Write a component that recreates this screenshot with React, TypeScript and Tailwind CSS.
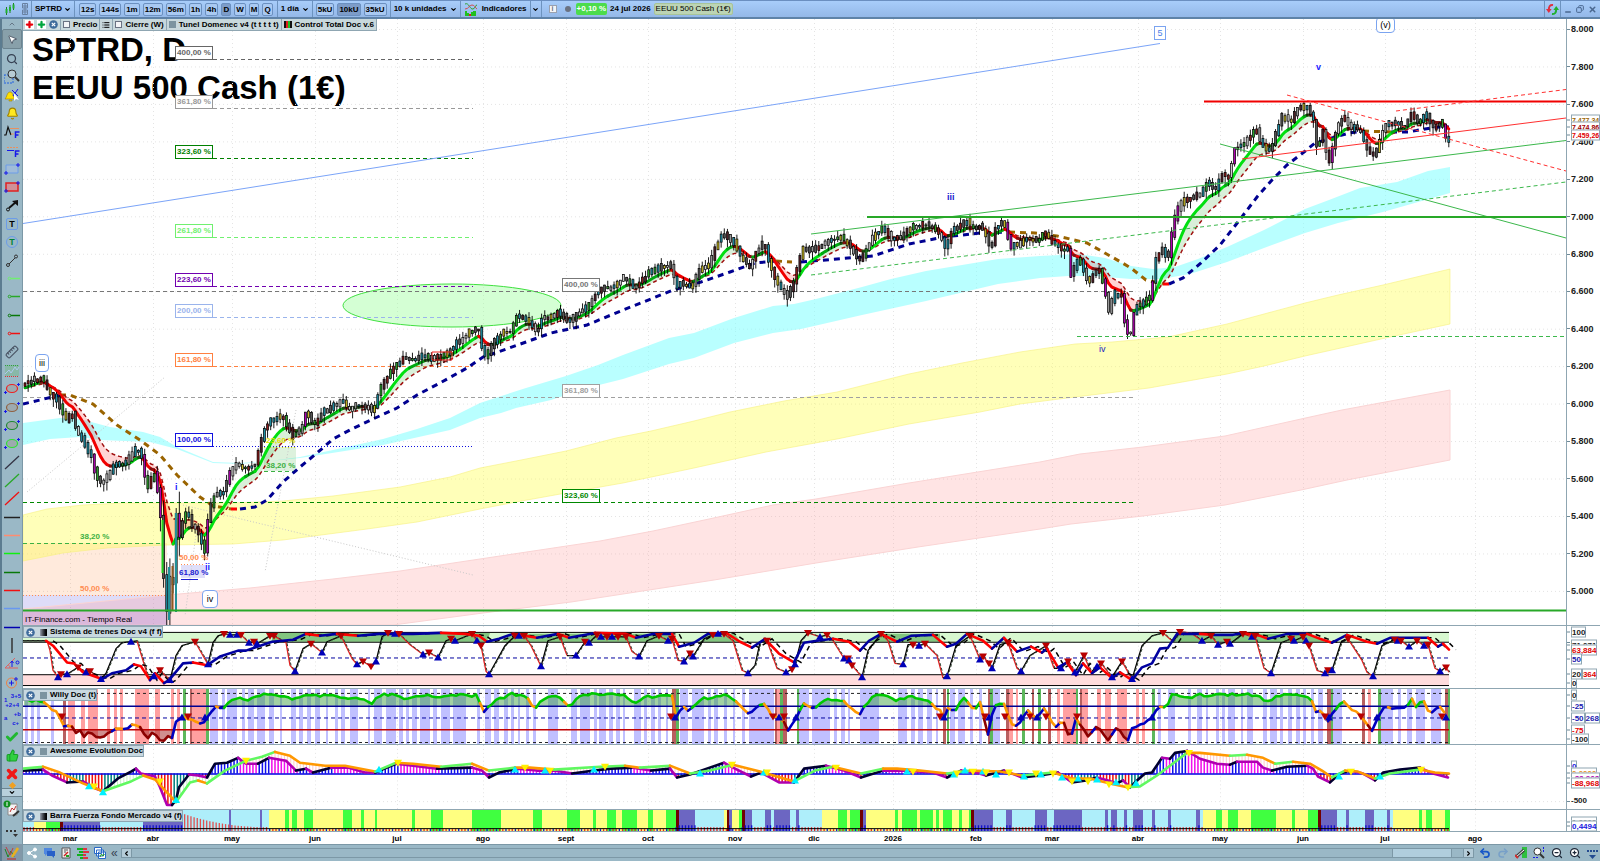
import type { ReactNode } from 'react';
import {
  Bell, Check, ChevronDown, ChevronLeft, ChevronRight, ChevronUp, Copy, List, Minus,
  MousePointer2, Plus, Redo2, Ruler, Search, Share2, ThumbsUp, Undo2, X, ZoomIn, ZoomOut,
} from 'lucide-react';

type Pt = [number, number];

const X0 = 23;
const PLOT_W = 1543;

const MONTHS: [string, number][] = [
  ['mar', 70], ['abr', 153], ['may', 232], ['jun', 315], ['jul', 397], ['ago', 483], ['sept', 566],
  ['oct', 648], ['nov', 735], ['dic', 814], ['2026', 893], ['feb', 976], ['mar', 1052], ['abr', 1138],
  ['may', 1220], ['jun', 1303], ['jul', 1385], ['ago', 1475],
];

const PRICE = '25,383 33,380 42,378 49,394 55,397 60,408 66,420 72,413 77,433 83,440 87,450 92,457 95,475 102,485 108,475 113,467 118,463 124,465 130,457 137,448 142,457 144,473 147,488 152,478 155,473 158,495 161,520 163,570 167,613 169,567 172,607 176,515 180,540 184,513 188,515 192,525 197,530 201,540 204,557 207,523 213,497 218,495 223,493 230,473 235,463 240,467 247,468 255,465 260,443 265,427 272,420 282,417 288,427 293,437 302,427 306,410 312,423 317,423 323,412 333,407 342,400 348,410 355,405 367,407 373,412 377,397 383,383 393,368 403,358 413,360 425,355 433,360 447,353 455,345 464,337 474,329 480,330 483,357 487,355 494,342 503,332 510,332 516,317 525,318 534,328 537,333 542,318 551,317 560,312 569,323 578,313 587,307 596,293 605,288 614,287 625,277 634,287 641,282 650,272 662,267 673,265 675,290 680,283 691,288 700,268 709,267 716,245 723,235 728,237 734,243 742,260 750,267 757,250 764,243 769,262 775,280 780,288 787,297 794,283 798,262 803,250 812,250 819,247 832,240 842,238 851,247 859,262 866,250 873,237 882,229 891,238 900,240 909,228 923,225 934,227 941,238 946,250 950,233 959,227 966,221 973,228 980,227 985,233 991,253 994,228 1005,223 1010,247 1019,245 1027,238 1037,242 1044,232 1050,240 1061,250 1068,250 1072,287 1075,260 1081,263 1088,283 1098,267 1103,283 1109,313 1114,293 1122,297 1125,328 1130,337 1135,307 1142,303 1151,297 1155,260 1162,248 1168,260 1172,233 1176,212 1183,200 1191,199 1201,193 1208,183 1217,190 1220,175 1229,177 1234,150 1246,142 1256,128 1261,143 1270,152 1277,130 1282,117 1291,122 1298,108 1306,107 1313,117 1317,150 1323,130 1327,160 1330,162 1334,137 1339,123 1344,117 1351,128 1360,130 1366,147 1372,157 1378,147 1384,127 1392,122 1404,127 1411,115 1418,123 1426,113 1432,128 1439,123 1444,125 1446,140 1449,142';

const CYAN_TOP = '23,423 60,418 80,419 110,427 143,432 160,437 177,447 213,462 240,463 270,461 300,457 333,450 383,439 417,429 450,418 480,403 526,388 566,376 598,365 623,355 669,338 694,333 734,318 773,306 794,304 816,299 862,287 891,279 926,271 962,265 998,259 1040,256 1079,254 1105,258 1131,266 1153,269 1175,267 1198,259 1227,247 1264,230 1305,209 1329,200 1360,188 1397,182 1428,171 1450,167';
const CYAN_LOW = '23,445 50,439 80,437 100,440 150,442 177,449 213,463 240,464 300,458 383,445 450,430 480,418 501,413 516,408 551,400 587,388 623,379 669,364 694,358 734,343 773,333 801,329 862,315 926,301 998,284 1040,278 1068,276 1094,276 1131,279 1161,279 1190,274 1227,262 1264,248 1305,233 1338,223 1383,212 1450,193';
const YELLOW_TOP = '23,515 47,509 83,505 123,503 233,503 283,501 333,496 400,487 450,477 480,468 516,461 566,451 616,438 651,431 694,421 730,412 784,401 837,392 909,374 962,363 1020,352 1075,344 1112,342 1168,337 1227,324 1264,314 1305,303 1338,295 1383,285 1450,269';
const YELLOW_LOW = '23,561 63,553 107,548 167,545 233,544 283,540 367,529 417,522 480,509 516,502 566,493 623,483 694,468 766,452 837,439 909,424 980,412 1020,404 1075,397 1149,388 1227,374 1264,366 1305,356 1390,337 1450,324';
const PINK_TOP = '23,609 167,595 250,588 333,579 400,571 500,556 600,541 653,531 709,519 773,505 816,499 909,483 1040,462 1080,454 1143,447 1225,436 1301,419 1342,410 1450,390';
const PINK_LOW = '23,625 393,625 483,613 571,602 714,580 816,563 918,547 1040,529 1071,524 1143,516 1225,505 1301,490 1347,480 1450,460';

// the long average changes colour with its direction
const LONG_MA: [string, string][] = [
  ['#000090', '23,404 40,400 60,395'],
  ['#9a6400', '60,395 70,395 93,404 117,425 140,440 160,455 177,475 200,497 213,506 231,509'],
  ['#ff0000', '231,509 240,509'],
  ['#000090', '240,509 255,507 267,500 283,482 300,467 317,453 333,439 350,430 373,419 397,408 417,395 440,383 467,368 483,357 498,352 526,342 551,333 587,325 623,310 641,303 673,290 701,282 730,272 755,263 776,261'],
  ['#9a6400', '776,261 792,262'],
  ['#000090', '801,262 837,259 873,256 909,244 944,237 980,233 1006,232'],
  ['#9a6400', '1009,232 1035,233 1057,236 1087,243 1112,257 1131,268 1146,280 1163,284'],
  ['#ff0000', '1163,284 1169,284'],
  ['#000090', '1169,284 1183,278 1201,263 1220,245 1238,222 1257,197 1272,180 1287,165 1304,152 1315,143 1332,138 1349,133 1363,131'],
  ['#9a6400', '1363,131 1391,132'],
  ['#000090', '1391,132 1408,132 1425,129 1439,127 1449,127'],
];

// x, y, direction (1 = up triangle, 0 = down, 2 = no mark) of the train signals
const TRAIN = '58,677,1 61,674,0 67,674,1 78,667,0 86,672,1 90,671,0 101,679,1 106,673,2 116,648,2 122,642,2 131,641,1 137,640,2 148,677,2 154,676,1 160,670,0 170,680,1 176,655,2 182,645,2 195,641,0 208,664,1 213,642,2 218,635,2 224,633,0 230,634,1 237,634,1 241,634,0 249,642,1 254,641,0 257,643,1 270,635,0 274,635,0 286,642,2 290,665,2 295,671,1 303,648,2 311,643,0 322,652,1 327,641,2 341,635,0 352,658,2 357,664,1 363,661,0 371,666,0 376,661,1 382,636,2 388,632,0 395,633,1 399,633,0 410,644,2 423,654,1 429,652,0 438,657,1 446,640,2 451,638,0 455,640,1 472,633,0 477,640,1 481,645,0 486,671,2 489,674,1 505,645,2 515,635,0 519,635,1 524,635,0 531,645,2 541,666,1 548,640,2 560,636,0 567,655,2 576,655,1 585,641,0 589,642,1 597,634,0 601,636,1 607,636,0 612,636,1 618,636,0 626,636,0 632,651,2 639,656,1 647,640,2 659,635,0 668,640,1 672,638,0 678,660,2 684,661,1 690,653,0 693,656,1 704,638,2 713,634,0 718,633,1 724,633,0 733,640,2 742,670,2 748,673,1 755,665,2 760,642,2 767,640,0 777,668,2 786,672,1 792,669,0 795,664,1 801,640,2 808,632,0 820,636,1 827,634,0 833,640,2 844,658,1 848,658,0 849,660,1 852,665,0 862,677,1 868,650,2 881,633,0 888,640,2 895,663,2 903,664,1 908,644,2 913,644,0 919,645,1 925,643,0 937,655,2 943,678,2 947,676,1 956,645,2 970,635,0 980,659,1 983,656,0 989,663,0 992,668,1 1000,644,2 1008,642,0 1017,668,2 1021,671,1 1030,655,2 1046,645,0 1054,668,2 1061,668,1 1068,661,0 1075,672,1 1084,655,0 1091,672,2 1097,666,1 1101,663,0 1112,677,1 1122,661,0 1132,679,1 1142,645,2 1152,635,2 1163,632,0 1173,641,2 1180,631,0 1191,632,2 1202,640,1 1211,635,0 1218,644,1 1227,641,0 1230,643,1 1243,633,0 1252,636,1 1255,635,0 1264,668,2 1271,673,1 1281,642,2 1291,638,0 1294,640,1 1303,636,0 1306,640,1 1309,645,0 1317,670,2 1325,673,1 1328,670,0 1332,670,1 1341,642,2 1348,638,0 1362,660,2 1367,672,2 1373,676,1 1382,645,2 1395,639,0 1398,640,1 1401,640,0 1409,646,1 1417,640,0 1424,645,1 1428,644,0 1435,668,2 1440,671,1 1446,667,0 1449,672,2';
const TRAIN_SLOW = '46,640 53,645 67,662 74,663 83,672 102,679 112,673 126,670 134,664 141,666 150,680 155,673 164,683 169,680 183,663 193,662 207,665 220,656 238,650 246,650 272,641 293,639 306,633 320,635 337,633 358,635 379,633 413,633 441,632 465,633 479,635 487,641 499,638 513,633 537,637 558,633 569,637 595,632 626,633 636,637 654,633 672,633 679,646 694,642 708,633 726,632 740,641 752,647 765,638 779,653 794,662 804,642 817,640 833,638 849,641 860,650 869,640 881,633 897,641 911,635 933,634 947,646 956,643 967,633 983,640 992,648 1004,637 1017,651 1031,646 1042,652 1047,648 1058,667 1067,662 1076,675 1083,663 1092,673 1100,667 1112,678 1120,672 1132,680 1142,667 1152,663 1160,648 1168,647 1177,633 1200,633 1213,634 1233,634 1243,632 1260,635 1268,638 1287,633 1307,633 1320,638 1332,642 1347,634 1367,641 1377,643 1390,637 1407,637 1428,637 1438,646 1443,643 1449,649';

const WILLY = '24,700 46,700 50,710 57,712 65,728 71,722 74,735 80,730 84,736 89,733 98,738 110,733 117,728 127,728 133,722 141,728 146,739 153,732 162,742 167,735 172,737 176,720 186,717 203,723 214,706 224,706 229,702 238,697 248,700 262,694 275,693 293,698 306,694 320,695 337,694 348,699 362,697 372,703 377,694 396,694 403,698 424,694 441,697 461,693 477,695 484,711 494,700 503,697 510,693 527,696 534,710 540,700 547,695 560,697 570,707 579,695 600,693 626,695 633,703 644,696 672,695 675,717 683,707 690,710 701,698 726,694 736,702 749,715 763,700 772,717 783,717 786,733 797,717 802,703 813,707 829,698 844,700 851,707 860,713 872,695 880,693 897,700 908,695 926,700 940,710 944,717 949,707 956,710 965,694 974,713 979,697 988,733 994,706 1004,702 1013,727 1020,722 1029,710 1036,717 1044,707 1054,727 1063,720 1070,740 1076,717 1088,735 1097,725 1108,740 1117,727 1127,741 1133,727 1150,720 1157,707 1167,707 1172,693 1187,697 1200,694 1253,694 1267,700 1280,694 1300,694 1312,700 1317,713 1322,710 1328,720 1342,699 1350,708 1360,715 1372,730 1383,708 1407,707 1412,698 1417,707 1423,698 1430,713 1440,705 1447,717';
const WILLY_MARKS = '62,716,0 182,717,1 188,716,0 205,717,1 671,716,0 675,717,1 773,716,0 779,717,1 784,716,0 796,717,1 940,716,0 944,717,1 985,716,0 989,717,1 1005,716,0 1021,717,1 1030,716,0 1037,717,1 1046,716,0 1077,716,0 1152,717,1 1325,716,0 1329,717,1 1361,716,0 1377,717,1 1442,716,0 1446,717,1';

const STRIPES: [string, string][] = [
  ['#c0c0ff', '25-28 31-34 37-40 51-54 210-218 222-225 227-237 242-245 248-254 257-265 269-274 280-282 291-296 299-303 307-311 315-320 326-328 335-338 341-345 350-358 368-370 374-382 386-396 399-403 406-409 412-417 420-430 433-437 441-450 453-466 477-480 485-491 494-499 504-508 511-514 518-520 526-529 533-536 548-558 571-577 580-590 594-597 599-606 609-613 616-620 623-625 634-641 644-647 651-655 658-661 666-668 680-688 692-704 708-711 714-718 724-727 733-735 742-745 749-774 799-809 812-830 834-837 841-845 848-850 860-879 898-907 911-915 918-923 927-932 936-938 950-955 958-965 970-973 979-982 993-1000 1158-1161 1168-1175 1188-1191 1197-1202 1206-1208 1216-1219 1222-1225 1228-1235 1241-1243 1247-1253 1263-1267 1270-1277 1280-1283 1288-1292 1296-1300 1303-1306 1311-1314 1318-1323 1333-1342 1381-1393 1398-1401 1407-1412 1416-1425 1431-1441'],
  ['#ffa0a0', '68-75 81-85 88-98 107-110 114-117 120-123 135-149 155-160 171-174 177-180 190-206 777-780 1009-1013 1016-1018 1057-1060 1063-1076 1082-1088 1097-1101 1105-1111 1117-1127 1136-1139 1142-1145 1368-1371'],
  ['#b86060', '63-66 190-192 672-676 775-777 783-787 943-946 988-990 1006-1009 1032-1034 1048-1051 1080-1082 1327-1331 1362-1365 1445-1448'],
  ['#5cb85c', '183-186 206-209 676-679 780-783 797-799 947-949 990-993 1022-1025 1038-1041 1076-1078 1152-1155 1331-1333 1378-1381 1448-1450'],
];

const AO = '23,770 43,769 52,775 67,782 83,781 95,788 103,791 118,778 131,771 136,768 141,773 155,776 160,787 167,805 172,805 176,800 179,787 189,774 198,775 207,777 215,763 227,762 238,757 246,763 258,763 269,757 286,760 296,770 306,768 313,772 331,767 348,767 365,772 375,772 396,763 413,765 437,768 472,767 482,770 489,777 499,772 517,768 537,770 554,770 572,773 594,770 611,768 633,767 651,770 670,768 677,777 690,774 701,770 724,762 733,767 751,776 761,772 779,782 794,782 804,768 826,765 844,770 861,777 883,770 904,770 933,772 947,777 961,770 976,772 986,775 1004,770 1022,777 1040,775 1058,772 1072,782 1086,780 1097,777 1108,780 1117,783 1123,780 1130,787 1137,780 1145,773 1152,772 1162,757 1170,758 1175,752 1187,750 1200,758 1217,763 1230,764 1237,761 1257,761 1263,767 1272,770 1287,766 1307,765 1313,768 1318,776 1330,782 1340,773 1350,770 1363,773 1375,780 1383,772 1400,769 1420,767 1433,773 1448,777';
const AO_SIGNAL = '23,768 43,766 60,772 83,783 103,791 131,781 143,775 155,779 165,790 176,802 190,782 198,780 207,783 225,770 246,760 262,756 275,751 290,755 300,762 325,765 345,765 375,771 396,762 413,763 441,766 472,763 489,770 515,767 530,767 554,769 600,766 625,765 640,767 670,765 690,773 710,770 733,764 760,771 794,781 815,770 833,766 861,773 883,768 897,768 920,770 947,773 970,770 1000,771 1022,775 1053,772 1072,778 1090,778 1110,783 1127,787 1140,786 1157,775 1170,765 1187,752 1200,752 1230,755 1247,754 1263,757 1275,763 1293,761 1310,763 1322,770 1332,777 1345,770 1358,771 1375,778 1390,773 1420,769 1435,772 1449,773';
const AO_MARKS = '89,786,1 103,792,1 176,800,1 379,769,1 515,769,1 545,770,1 594,769,1 700,773,1 764,772,1 795,780,1 907,771,1 954,774,1 965,770,1 983,771,1 996,774,1 1024,776,1 1041,774,1 1062,777,1 1078,778,1 1097,779,1 1116,782,1 1136,783,1 1339,776,1 1380,776,1 94,786,0 160,781,0 246,760,0 398,762,0 525,767,0 550,770,0 605,766,0 732,764,0 767,772,0 836,767,0 913,771,0 957,773,0 973,771,0 986,772,0 1009,772,0 1036,773,0 1053,773,0 1072,781,0 1088,781,0 1109,784,0 1128,787,0 1189,752,0 1351,771,0 1421,769,0';

// market strength: colour key and the x where that colour ends
const FORCE = 'c34 y46 g60 m63 p100 c143 p183 c229 p231 c260 p262 c269 y285 g289 y292 g297 y304 g313 y343 g352 y361 g364 y375 g377 y412 g415 y431 g443 y472 g501 y533 g542 y567 g580 y593 g596 y607 g616 y622 g637 y648 g653 y666 g676 m679 p695 c724 y727 m729 p732 y739 g742 m745 p752 c765 p771 c774 p790 c796 p799 c822 y838 g847 y850 g860 m863 p866 y895 g898 y902 g917 y920 g933 y936 g939 y943 g952 y959 g962 y969 g971 m974 p993 c1006 p1012 c1035 p1047 c1054 p1082 c1105 p1108 c1111 p1117 c1124 p1127 c1133 p1143 c1152 p1155 c1168 p1171 c1196 p1200 c1203 y1216 g1222 y1228 g1238 y1251 g1276 y1292 g1295 y1308 g1318 m1321 p1337 c1346 p1349 c1365 p1374 c1387 p1390 c1393 y1419 g1422 y1426 g1432 y1445 g1450';
const FORCE_COLORS: Record<string, string> = {
  c: '#aeeefa', y: '#ffff80', g: '#40ff40', m: '#700000', p: '#6c66c2',
};

const parse = (s: string): number[][] => s.split(' ').map((p) => p.split(',').map(Number));
const toPath = (pts: number[][]) => 'M' + pts.map((p) => `${p[0]} ${p[1]}`).join('L');
const band = (top: string, low: string) => toPath([...parse(top), ...parse(low).reverse()]) + 'Z';

function sampleAt(pts: number[][], x: number) {
  let i = 1;
  while (i < pts.length - 1 && pts[i][0] < x) i++;
  const [ax, ay] = pts[i - 1];
  const [bx, by] = pts[i];
  const t = Math.min(1, Math.max(0, (x - ax) / (bx - ax)));
  return ay + (by - ay) * t;
}

function resample(pts: number[][], step: number): Pt[] {
  const out: Pt[] = [];
  for (let x = pts[0][0]; x <= pts[pts.length - 1][0]; x += step) out.push([x, sampleAt(pts, x)]);
  return out;
}

// splits a line into one path per colour
function colorRuns(pts: number[][], pick: (a: number[], b: number[]) => string) {
  const runs: [string, string][] = [];
  for (let i = 1; i < pts.length; i++) {
    const color = pick(pts[i - 1], pts[i]);
    const last = runs[runs.length - 1];
    if (last && last[0] === color) last[1] += `L${pts[i][0]} ${pts[i][1]}`;
    else runs.push([color, `M${pts[i - 1][0]} ${pts[i - 1][1]}L${pts[i][0]} ${pts[i][1]}`]);
  }
  return runs;
}

function random(seed: number) {
  let s = seed;
  return () => {
    s = (s * 16807) % 2147483647;
    return s / 2147483647;
  };
}

function buildCandles() {
  const rnd = random(77);
  const fills = ['#555', '#555', '#ccc', '#999', '#1d8fa5', '#1d8fa5', '#8c1a1a', '#c8b820', '#502028', '#28a028'];
  const base = resample(parse(PRICE), 3.15);
  return base.map(([x, y], i) => {
    const prev = i ? base[i - 1][1] : y + 3;
    const crash = x > 160 && x < 180 ? 18 : 0;
    const top = Math.min(y, prev) - rnd() * 4;
    const bottom = Math.max(y, prev) + rnd() * 3;
    return {
      x,
      top,
      bottom,
      high: top - rnd() * 6 - crash * rnd(),
      low: bottom + rnd() * 8 + crash * rnd(),
      fill: bottom - top > 14 && rnd() > 0.6 ? '#b000b0' : fills[Math.floor(rnd() * fills.length)],
    };
  });
}

function ema(pts: Pt[], alpha: number): Pt[] {
  let v = pts[0][1] + 6;
  return pts.map(([x, y]) => {
    v += (y - v) * alpha;
    return [x, Math.round(v * 10) / 10];
  });
}

const candles = buildCandles();
const priceLine = resample(parse(PRICE), 3.15);
const fast = ema(priceLine, 0.2);
const slow = ema(priceLine, 0.12);

function gapFill(above: boolean) {
  let d = '';
  for (let i = 1; i < fast.length; i++) {
    if (fast[i][1] < slow[i][1] === above) {
      d += `M${fast[i - 1][0]} ${fast[i - 1][1]}L${fast[i][0]} ${fast[i][1]}L${slow[i][0]} ${slow[i][1]}L${slow[i - 1][0]} ${slow[i - 1][1]}Z`;
    }
  }
  return d;
}

interface PlotProps {
  top: number;
  height: number;
  children: ReactNode;
}

function Plot({ top, height, children }: PlotProps) {
  return (
    <svg
      className="absolute inset-0 h-full w-full"
      viewBox={`${X0} ${top} ${PLOT_W} ${height}`}
      preserveAspectRatio="none"
      fill="none"
      aria-hidden="true"
    >
      {MONTHS.map(([, x]) => (
        <path key={x} d={`M${x + 0.5} ${top}v${height}`} stroke="#e4e4e4" strokeDasharray="1 3" />
      ))}
      {children}
    </svg>
  );
}

interface MarksProps {
  data: string;
  up: string;
  down: string;
}

function Marks({ data, up, down }: MarksProps) {
  return (
    <>
      {parse(data).filter((m) => m[2] !== 2).map(([x, y, dir], i) => (
        <path
          key={i}
          d={dir ? `M${x - 4} ${y + 3}h8l-4 -7z` : `M${x - 4} ${y - 3}h8l-4 7z`}
          fill={dir ? up : down}
        />
      ))}
    </>
  );
}

const FIBS: { label: string; x: number; y: number; color: string; to: number; dash: string; from?: number }[] = [
  { label: '400,00 %', x: 175, y: 59, color: '#666666', to: 473, dash: '4 3' },
  { label: '361,80 %', x: 175, y: 108, color: '#999999', to: 473, dash: '4 3' },
  { label: '323,60 %', x: 175, y: 158, color: '#008000', to: 473, dash: '4 3' },
  { label: '261,80 %', x: 175, y: 237, color: '#70f070', to: 473, dash: '4 3' },
  { label: '223,60 %', x: 175, y: 286, color: '#7000b0', to: 473, dash: '4 3' },
  { label: '200,00 %', x: 175, y: 317, color: '#9ab4ec', to: 473, dash: '4 3' },
  { label: '161,80 %', x: 175, y: 366, color: '#ff8040', to: 473, dash: '4 3' },
  { label: '100,00 %', x: 175, y: 446, color: '#1010e0', to: 473, dash: '1 2' },
  { label: '400,00 %', x: 562, y: 291, color: '#777777', to: 1136, dash: '4 3', from: 23 },
  { label: '361,80 %', x: 562, y: 397, color: '#a0a0a0', to: 1136, dash: '4 3', from: 23 },
  { label: '323,60 %', x: 562, y: 502, color: '#008800', to: 1136, dash: '4 3', from: 23 },
];

const NOTES: { text: string; x: number; y: number; look: string }[] = [
  { text: '38,20 %', x: 80, y: 532, look: 'text-[#3cb043]' },
  { text: '50,00 %', x: 80, y: 584, look: 'text-[#ff8c50]' },
  { text: '23,60 %', x: 266, y: 436, look: 'text-[#e0e000]' },
  { text: '38,20 %', x: 266, y: 461, look: 'text-[#3cb043]' },
  { text: '50,00 %', x: 179, y: 553, look: 'text-[#ff8c50]' },
  { text: '61,80 %', x: 179, y: 568, look: 'text-[#2020d0]' },
  { text: 'i', x: 175, y: 482, look: 'text-[9px] text-[#2020ff]' },
  { text: 'ii', x: 205, y: 562, look: 'text-[9px] text-[#2020ff]' },
  { text: 'iii', x: 947, y: 192, look: 'text-[9px] text-[#2020d0]' },
  { text: 'iv', x: 1099, y: 344, look: 'text-[9px] text-[#2020c0] font-normal' },
  { text: 'v', x: 1316, y: 62, look: 'text-[9px] text-[#2020ff]' },
];

const BOXES: { text: string; x: number; y: number; look: string }[] = [
  { text: 'iii', x: 35, y: 354, look: 'h-[18px] w-[14px] rounded border-[#7ba4f0]' },
  { text: 'iv', x: 202, y: 590, look: 'h-[18px] w-[16px] rounded border-[#7ba4f0]' },
  { text: '5', x: 1154, y: 26, look: 'h-[14px] w-[12px] border-[#7ba4f0] text-[#4a80e8]' },
  { text: '(v)', x: 1376, y: 17, look: 'h-[16px] w-[19px] rounded border-[#7ba4f0]' },
];

interface SpotProps {
  x: number;
  y: number;
  look: string;
  children: ReactNode;
}

// text pinned to a chart coordinate of the main plot
function Spot({ x, y, look, children }: SpotProps) {
  return (
    <span
      className={`absolute whitespace-nowrap leading-[10px] ${look}`}
      style={{ left: `${((x - X0) / PLOT_W) * 100}%`, top: `${((y - 19) / 606) * 100}%` }}
    >
      {children}
    </span>
  );
}

function PriceDrawing() {
  return (
    <Plot top={19} height={606}>
      {Array.from({ length: 16 }, (_, i) => (
        <path key={i} d={`M23 ${29.5 + i * 37.46}H1566`} stroke="#e4e4e4" strokeDasharray="1 3" />
      ))}
      <path d="M23 543H167V595H23z" fill="#ff8c3c" fillOpacity="0.18" />
      <path d="M23 595H167V625H23z" fill="#5a50dc" fillOpacity="0.2" />
      <path d={band(PINK_TOP, PINK_LOW)} fill="#ff9696" fillOpacity="0.26" stroke="#fad4d4" />
      <path d={band(YELLOW_TOP, YELLOW_LOW)} fill="#ffff50" fillOpacity="0.4" stroke="#f6f080" strokeWidth="0.6" />
      <path d={band(CYAN_TOP, CYAN_LOW)} fill="#80ffff" fillOpacity="0.55" />
      <path d="M23 610H167V625H23z" fill="#a050c8" fillOpacity="0.15" />
      <ellipse cx="452" cy="305.5" rx="109" ry="21.5" fill="#a0ffa0" fillOpacity="0.45" stroke="#40e040" />
      <path d="M264 447h32v24h-32z" fill="#40b040" fillOpacity="0.18" />
      <path d="M181 565h24v13h-24z" fill="#6060e0" fillOpacity="0.2" />
      <path d="M27 492L165 377M183 505L473 575M296 410L265 572M197 527L185 616" stroke="#c8c8c8" strokeDasharray="1 2" />
      {FIBS.map((f) => (
        <path key={f.y + f.x} d={`M${f.from ?? 213} ${f.y + 0.5}H${f.to}`} stroke={f.color} strokeDasharray={f.dash} />
      ))}
      <path d="M23 543.5H163M264 471.5h32" stroke="#3cb043" strokeDasharray="4 3" />
      <path d="M23 595.5H167M181 564.5h24" stroke="#ff8c50" strokeDasharray="1 2" />
      <path d="M264 447.5h32" stroke="#e0e000" strokeDasharray="1 2" />
      <path d="M181 579.5h17" stroke="#2020d0" />
      <path d="M23 223.5L1160 43.5" stroke="#7ba4f8" />

      <path d={gapFill(true)} fill="#40b040" fillOpacity="0.2" />
      <path d={gapFill(false)} fill="#ff4040" fillOpacity="0.22" />
      {LONG_MA.map(([color, pts], i) => (
        <path key={i} d={toPath(parse(pts))} stroke={color} strokeWidth="3" strokeDasharray="6 5" />
      ))}
      <path d={toPath(slow)} stroke="#a01010" strokeWidth="1.5" strokeDasharray="4 3" />
      {colorRuns(fast, (a, b) => {
        const rise = a[1] - b[1];
        if (rise > 2) return '#00e010';
        if (rise > 0.8) return '#00a810';
        if (rise > 0) return '#1c5010';
        if (rise > -1.2) return '#801010';
        return '#f00000';
      }).map(([color, d], i) => (
        <path key={i} d={d} stroke={color} strokeWidth="3" strokeLinejoin="round" strokeLinecap="round" />
      ))}
      {candles.map((c) => (
        <g key={c.x}>
          <path d={`M${c.x} ${c.high}V${c.low}`} stroke="#000" strokeWidth="0.9" />
          <rect x={c.x - 1} y={c.top} width="2" height={c.bottom - c.top} fill={c.fill} stroke="#000" strokeWidth="0.7" />
        </g>
      ))}
      <path d="M162.5 520V573" stroke="#20d020" strokeWidth="2" />
      <path d="M176 513V612M169 567V620" stroke="#209098" strokeWidth="2" />
      <path d="M172.5 566V610" stroke="#905820" strokeWidth="2" />

      <path d="M432 352h20v8h-20z" stroke="#f02020" />
      <path d="M811 234L1566 140.5M1220 144L1566 238" stroke="#3cb84c" />
      <path d="M811 275L1566 182M1077 336.5H1566" stroke="#3cb84c" strokeDasharray="4 3" />
      <path d="M867 217H1566M23 610.5H1566" stroke="#28a828" strokeWidth="2" />
      <path d="M1204 101.5H1566" stroke="#f00000" strokeWidth="2" />
      <path d="M1242 159L1566 118" stroke="#ff3030" />
      <path d="M1287 95L1566 171M1396 111L1566 89.5" stroke="#ff3030" strokeDasharray="4 3" />
    </Plot>
  );
}

function TrainDrawing() {
  const fastLine: number[][] = [[23, 640], [47, 640], [50, 650], [53, 670], ...parse(TRAIN).map((p) => [p[0], p[1]])];
  const slowLine = parse(TRAIN_SLOW);
  return (
    <Plot top={625} height={63}>
      <path d="M23 631.5H1449V641.5H23z" fill="#d8f8d0" />
      <path d="M23 674.5H1449V685.5H23z" fill="#ffdcdc" />
      <path d="M272 632H490L487 641H272zM500 641L513 633H672V641zM700 641L708 633H735L740 641zM869 641L881 633H940V641zM1173 641L1177 633H1310L1325 641z" fill="#3c9c3c" fillOpacity="0.55" />
      <path d="M23 631.5H1449M23 641.5H1449M23 674.5H1449M23 685.5H1449" stroke="#000" />
      <path d="M23 657.5H1449" stroke="#0000a0" strokeDasharray="4 3" />
      {colorRuns(fastLine, (a, b) => (b[1] > a[1] ? '#e02020' : '#000')).map(([color, d], i) => (
        <path key={i} d={d} stroke={color} strokeWidth="1.3" strokeLinejoin="round" />
      ))}
      <path d={toPath(fastLine.map(([x, y]) => [x + 1, y]))} stroke="#304030" strokeDasharray="3 2" />
      <path d={toPath(slowLine.map(([x, y]) => [x + 7, y]))} stroke="#000" strokeWidth="1.5" strokeDasharray="5 4" />
      {colorRuns(slowLine, (a, b) => (b[1] > a[1] ? '#ff0000' : '#0000a0')).map(([color, d], i) => (
        <path key={i} d={d} stroke={color} strokeWidth="2.6" strokeLinejoin="round" strokeLinecap="round" />
      ))}
      <Marks data={TRAIN} up="#0000b8" down="#b80000" />
    </Plot>
  );
}

function WillyDrawing() {
  const rnd = random(9);
  const line = resample(parse(WILLY), 4).map(([x, y]) => [x, y + (rnd() - 0.5) * 3]);
  const clip = (level: number, keep: (y: number) => number) =>
    toPath([[24, level], ...line.map(([x, y]) => [x, keep(y)]), [1447, level]]) + 'Z';
  return (
    <Plot top={688} height={56}>
      {STRIPES.map(([color, list]) => (
        <path
          key={color}
          fill={color}
          d={list.split(' ').map((r) => {
            const [a, b] = r.split('-');
            return `M${a} 688H${b}V744H${a}z`;
          }).join('')}
        />
      ))}
      <path d={clip(705, (y) => Math.min(y, 705))} fill="#309830" fillOpacity="0.45" />
      <path d={clip(729.5, (y) => Math.max(y, 729.5))} fill="#a02020" fillOpacity="0.5" />
      <path d="M23 692.5H1449M23 742.5H1449" stroke="#202020" strokeDasharray="3 3" />
      <path d="M23 717.5H1449" stroke="#0000a0" strokeDasharray="4 3" />
      <path d="M23 705.5H1449" stroke="#000090" strokeWidth="1.5" />
      <path d="M23 729.5H1449" stroke="#c00000" strokeWidth="1.5" />
      {colorRuns(line, (a, b) => {
        if (b[1] < 704) return '#00c800';
        if (b[1] > 729) return '#8c0000';
        return b[1] > a[1] ? '#ff9800' : '#0000c0';
      }).map(([color, d], i) => (
        <path key={i} d={d} stroke={color} strokeWidth="2.6" strokeLinejoin="round" strokeLinecap="round" />
      ))}
      <Marks data={WILLY_MARKS} up="#0000b8" down="#b80000" />
    </Plot>
  );
}

function AwesomeDrawing() {
  const ao = parse(AO);
  const signal = parse(AO_SIGNAL);
  const bars = resample(ao, 3.15);
  return (
    <Plot top={744} height={65}>
      <path d="M23 801.5H1566" stroke="#e4e4e4" strokeDasharray="1 3" />
      {bars.map(([x, y], i) => {
        const rising = i > 0 && y < bars[i - 1][1];
        const color = y < 773 ? (rising ? '#1010f0' : '#f010f0') : rising ? '#008080' : '#f01010';
        const outer = sampleAt(signal, x);
        return (
          <g key={x}>
            <path d={`M${x} 773V${outer}`} stroke={outer < y ? '#ffc8c8' : '#c8f0c8'} strokeWidth="1" />
            <path d={`M${x} 773V${y}`} stroke={color} strokeWidth="1.5" />
          </g>
        );
      })}
      <path d="M23 773.5H1449" stroke="#0000e0" strokeWidth="1.5" />
      {colorRuns(ao, (a, b) => (b[1] >= a[1] ? '#b000b0' : '#000030')).map(([color, d], i) => (
        <path key={i} d={d} stroke={color} strokeWidth="2.6" strokeLinejoin="round" strokeLinecap="round" />
      ))}
      {colorRuns(signal, (a, b) => (b[1] >= a[1] ? '#ff9800' : '#60f860')).map(([color, d], i) => (
        <path key={i} d={d} stroke={color} strokeWidth="2.6" strokeLinejoin="round" strokeLinecap="round" />
      ))}
      <Marks data={AO_MARKS} up="#00f0ff" down="#fff000" />
    </Plot>
  );
}

function ForceDrawing() {
  const cells = FORCE.split(' ').map((c) => ({ key: c[0], end: Number(c.slice(1)) }));
  const keyAt = (x: number) => cells.find((c) => x <= c.end)?.key ?? 'g';
  const ticks = Array.from({ length: 453 }, (_, i) => 24 + i * 3.15);
  return (
    <Plot top={809} height={22}>
      {cells.map((c, i) => {
        const start = i ? cells[i - 1].end : X0;
        return <rect key={c.end} x={start} y="809" width={c.end - start} height="22" fill={FORCE_COLORS[c.key]} />;
      })}
      {ticks.map((x, i) => {
        const key = keyAt(x);
        const quiet = key === 'y' || key === 'g';
        let h = quiet ? 2 : key === 'p' ? 6 : 4;
        const fading = x > 183 && x < 265;
        if (fading) h = 4 + 14 * ((265 - x) / 82) ** 2;
        const color = fading ? '#e05050' : (quiet ? i % 3 > 0 : key === 'c') ? '#e82020' : '#1010d0';
        return <path key={x} d={`M${x} 831v${-h}`} stroke={color} strokeWidth="1.3" />;
      })}
      <path d="M23 828.5H1449" stroke="#000" />
    </Plot>
  );
}

interface TickProps {
  at: number;
  look?: string;
  children: ReactNode;
}

function Tick({ at, look = 'text-[#202020]', children }: TickProps) {
  return (
    <span
      className={`absolute left-0 flex -translate-y-1/2 items-center whitespace-nowrap before:mr-px before:h-px before:w-[3px] before:bg-[#6f8a98] ${look}`}
      style={{ top: `${at}%` }}
    >
      {children}
    </span>
  );
}

const BOXED = 'border border-[#8fa6b2] bg-white leading-[9px]';

function CloseDot() {
  return (
    <svg className="h-[9px] w-[9px]" viewBox="0 0 9 9" fill="none" aria-hidden="true">
      <circle cx="4.5" cy="4.5" r="4.3" fill="#3f6c9c" />
      <path d="M2.8 2.8l3.4 3.4M6.2 2.8L2.8 6.2" stroke="#fff" strokeWidth="1.2" />
    </svg>
  );
}

interface PanelProps {
  title: string;
  size: string;
  striped?: boolean;
  axis: ReactNode;
  children: ReactNode;
}

function Panel({ title, size, striped, axis, children }: PanelProps) {
  return (
    <section className={`flex border-t border-[#8fa6b2] ${size}`}>
      <div className="relative flex-1 overflow-hidden">
        {children}
        <h2 className="absolute left-0 top-0 flex h-[12px] items-center border border-[#8fa6b2] bg-[#c8d8e0] text-[8px] font-bold">
          <button className="flex w-[13px] justify-center" aria-label={`Cerrar ${title}`}>
            <CloseDot />
          </button>
          <span className={`mx-[3px] h-[7px] w-[7px] ${striped ? 'bg-linear-to-r from-gray-400 to-black' : 'bg-[#7c94a0]'}`} />
          <span>{title}</span>
        </h2>
      </div>
      <div className="relative w-[34px] overflow-hidden border-l border-[#8fa6b2] text-[8px] font-bold">{axis}</div>
    </section>
  );
}

function Separator() {
  return <span className="h-full w-px shrink-0 bg-[#6d93bf]" />;
}

interface PeriodProps {
  name: string;
  active?: boolean;
}

function Period({ name, active }: PeriodProps) {
  return (
    <button
      className={`h-[13px] rounded-[2px] border border-[#6b90c0] px-px ${active ? 'bg-[#7d9cc8]' : 'bg-[#a9c9f2]'}`}
    >
      {name}
    </button>
  );
}

interface PickProps {
  label: string;
  value: string;
  width: string;
}

function Pick({ label, value, width }: PickProps) {
  return (
    <label className={`flex shrink-0 items-center justify-between px-[3px] ${width}`}>
      <select aria-label={label} className="w-full appearance-none bg-transparent font-bold">
        <option>{value}</option>
      </select>
      <ChevronDown className="h-[7px] w-[7px] shrink-0" strokeWidth={4} />
    </label>
  );
}

function Toolbar() {
  return (
    <header className="flex h-[19px] shrink-0 items-center overflow-hidden whitespace-nowrap border-b-2 border-t border-b-[#5f83a8] border-t-[#6b8fc0] bg-linear-to-b from-[#a8cdfa] to-[#94b8e8] text-[8px] font-bold">
      <svg className="ml-1 h-[12px] w-[12px] shrink-0" viewBox="0 0 12 12" aria-hidden="true">
        <path d="M2.500 4v8M6 2v8M9.500 0v7" stroke="#208020" />
        <path d="M1.500 6h2v4h-2zM5 4h2v4H5zM8.500 1.500h2v4h-2z" fill="#20b030" />
      </svg>
      <svg className="ml-[6px] mr-[3px] h-[12px] w-[6px] shrink-0" viewBox="0 0 6 12" fill="none" aria-hidden="true">
        <path d="M.5.500h5v4.500h-5zM.5 7h5v4.500h-5zM.5 3h5M.5 9h5M3 .5v11" stroke="#6880a0" />
      </svg>
      <Separator />
      <Pick label="Valor" value="SPTRD" width="w-[42px]" />
      <Separator />
      <div className="flex items-center gap-[3px] px-1">
        {['12s', '144s', '1m', '12m', '56m', '1h', '4h', 'D', 'W', 'M', 'Q'].map((p) => (
          <Period key={p} name={p} active={p === 'D'} />
        ))}
      </div>
      <Separator />
      <Pick label="Unidad de tiempo" value="1 día" width="w-[34px]" />
      <Separator />
      <div className="flex items-center gap-[3px] px-[3px]">
        {['5kU', '10kU', '35kU'].map((p) => (
          <Period key={p} name={p} active={p === '10kU'} />
        ))}
      </div>
      <Separator />
      <Pick label="Historial" value="10 k unidades" width="w-[69px]" />
      <Separator />
      <button className="flex items-center gap-1 px-[3px]">
        <svg className="h-[14px] w-[14px]" viewBox="0 0 14 14" fill="none" aria-hidden="true">
          <path d="M1 2c4-2 5 6 8 5s2-4 4-4" stroke="#30a030" />
          <path d="M1 7c4 0 4-4 7-4s3 3 5 4" stroke="#d05050" />
          <path d="M1 14V9h2v2h2v3zM7 14v-4h2V9h3v5z" fill="#20c020" />
          <path d="M5 14v-2h2v2z" fill="#e02020" />
        </svg>
        Indicadores
      </button>
      <Separator />
      <button className="flex w-[10px] shrink-0 justify-center" aria-label="Más indicadores">
        <ChevronDown className="h-[7px] w-[7px]" strokeWidth={4} />
      </button>
      <Separator />
      <button className="ml-[7px] h-[8px] w-[8px] border border-gray-400 bg-gray-100 text-[7px] leading-[6px] text-gray-500">i</button>
      <span className="ml-2 h-[6px] w-[6px] rounded-full bg-gray-500" />
      <span className="ml-[5px] rounded-[2px] bg-[#4cdc4c] px-px leading-[12px] text-white">+0,10 %</span>
      <span className="mx-[3px]">24 jul 2026</span>
      <span className="rounded-[2px] border border-[#a8c498] bg-[#bcd4b4] px-px font-normal leading-[10px]">EEUU 500 Cash (1€)</span>
      <div className="ml-auto flex h-full items-center">
        <Separator />
        <button className="px-px" aria-label="Sincronizar">
          <svg className="h-[13px] w-[13px]" viewBox="0 0 13 13" fill="none" aria-hidden="true">
            <path d="M7 2C4 1.500 2.800 3.500 2.800 7" stroke="#e03040" strokeWidth="2" />
            <path d="M0 6h5.600L2.800 10z" fill="#e03040" />
            <path d="M6 11c3 .5 4.200-1.500 4.200-5" stroke="#20b030" strokeWidth="2" />
            <path d="M7.400 7H13L10.200 3z" fill="#20b030" />
          </svg>
        </button>
        <Separator />
        <div className="flex items-center gap-1 px-[3px] text-[#4a6890]">
          <button className="pt-[6px]" aria-label="Minimizar"><Minus className="h-[8px] w-[8px]" strokeWidth={4} /></button>
          <button aria-label="Restaurar"><Copy className="h-[8px] w-[8px] -scale-x-100" strokeWidth={3} /></button>
          <button aria-label="Cerrar"><X className="h-[9px] w-[9px]" strokeWidth={4} /></button>
        </div>
      </div>
    </header>
  );
}

function Glyph({ children }: { children: ReactNode }) {
  return (
    <svg className="h-[15px] w-[16px]" viewBox="0 0 16 15" fill="none" aria-hidden="true">
      {children}
    </svg>
  );
}

const segment = (color: string) => (
  <Glyph>
    <path d="M7 7.500h9" stroke={color} strokeWidth="1.500" />
    <circle cx="5.500" cy="7.500" r="1.300" stroke={color} />
  </Glyph>
);
const oval = (color: string) => (
  <Glyph>
    <ellipse cx="8" cy="7.500" rx="5.500" ry="4" stroke={color} strokeWidth="1.200" fill="#a0a0a0" fillOpacity="0.6" />
    <path d="M0 11.500h3M1.500 10v3M13 3.500h3M14.500 2v3" stroke="#1818e8" />
  </Glyph>
);
const slash = (color: string) => <Glyph><path d="M1 14L15 1" stroke={color} strokeWidth="1.300" /></Glyph>;
const rule = (color: string) => <Glyph><path d="M0 7.500h16" stroke={color} strokeWidth="1.500" /></Glyph>;
const letters = (a: string, b: string, c: string) => (
  <span className="relative h-[15px] w-[18px] text-[6px] font-bold leading-[6px] text-[#1818e0]">
    <span className="absolute left-px top-[4px]">{a}</span>
    <span className="absolute right-0 top-0">{b}</span>
    <span className="absolute bottom-0 right-[2px]">{c}</span>
  </span>
);

const TOOLS: [string, ReactNode][] = [
  ['Cursor', <MousePointer2 className="h-[11px] w-[11px] text-gray-600" fill="#fff" />],
  ['Zoom', <Search className="h-[12px] w-[12px] text-gray-700" strokeWidth={2.5} />],
  ['Zoom de zona', <Glyph><path d="M0 6h9v8H0z" stroke="#2060e0" strokeDasharray="2 1" /><circle cx="8" cy="5" r="4" fill="#b8ccd4" stroke="#333" /><path d="M11 8l4 4" stroke="#333" strokeWidth="2" /></Glyph>],
  ['Alerta al cursor', <Glyph><path d="M1 11c2-2 2-7 5-7s3 5 5 7zM5 12h3v1H5z" fill="#ffe000" stroke="#a08000" strokeWidth="0.600" /><path d="M8 2l6 6M14 1L9 8" stroke="#1818e8" /><path d="M10 5v8l2-2 3 1z" fill="#fff" /></Glyph>],
  ['Alerta', <Bell className="h-[13px] w-[13px] text-[#a08000]" fill="#ffe820" />],
  ['Zigzag', <Glyph><path d="M0 11h2L4 3l3 8" stroke="#111" strokeWidth="1.200" /><path d="M6 4.500h9M7 10h3" stroke="#e89060" /><path d="M11.500 14V8h4M11.500 11h3" stroke="#1818e8" strokeWidth="1.500" /></Glyph>],
  ['Fibonacci', <Glyph><path d="M3 4.500h11" stroke="#e89060" strokeDasharray="2 1" /><path d="M3 7.500h7" stroke="#1818e8" /><path d="M11.500 14V8h4M11.500 11h3" stroke="#1818e8" strokeWidth="1.500" /></Glyph>],
  ['Rectángulo azul', <Glyph><path d="M2 4h12v8H2z" stroke="#6c9ce8" fill="#a0bcd8" /><path d="M0 12h4M2 10v4M12 4h4M14 2v4" stroke="#1818e8" /></Glyph>],
  ['Rectángulo rojo', <Glyph><path d="M2 4h12v8H2z" stroke="#e02020" strokeWidth="1.500" fill="#d09098" /><path d="M0 12h4M2 10v4M12 4h4M14 2v4" stroke="#1818e8" /></Glyph>],
  ['Flecha', <Glyph><circle cx="4" cy="11.500" r="1.500" stroke="#111" /><path d="M5 10l7-6" stroke="#111" strokeWidth="2" /><path d="M8 3l6-1v6z" fill="#111" /></Glyph>],
  ['Texto', <span className="h-[12px] w-[12px] rounded-[2px] border border-[#6c9ce8] text-[9px] font-bold leading-[11px]">T</span>],
  ['Globo de texto', <span className="h-[12px] w-[12px] rounded-full border border-[#6c9ce8] text-[9px] font-bold leading-[11px] text-green-700">T</span>],
  ['Segmento', <Glyph><circle cx="4" cy="12" r="1.500" stroke="#333" /><path d="M5 11l6-6" stroke="#333" /><circle cx="12" cy="3.500" r="1.500" stroke="#333" /></Glyph>],
  ['Semirrecta verde claro', segment('#70f070')],
  ['Semirrecta verde', segment('#28a828')],
  ['Semirrecta verde oscuro', segment('#087808')],
  ['Semirrecta roja', segment('#f01010')],
  ['Regla', <Ruler className="h-[14px] w-[14px] -scale-x-100 text-gray-600" />],
  ['Ondas', <Glyph><path d="M1 2h14v11H1z" fill="#88b8a8" /><path d="M1 2.500h14" stroke="#30a040" strokeDasharray="1 1" /><path d="M1 13.500h14" stroke="#e03030" strokeDasharray="1 1" /><path d="M1 11l4-4 2 3 4-6 2 3 2-3" stroke="#b0c8f0" /></Glyph>],
  ['Elipse roja', oval('#f02020')],
  ['Elipse marrón', oval('#906040')],
  ['Elipse verde', oval('#208830')],
  ['Elipse verde claro', oval('#30e030')],
  ['Línea gris', slash('#334')],
  ['Línea verde', slash('#28a828')],
  ['Línea roja', slash('#f01010')],
  ['Horizontal negra', rule('#222')],
  ['Horizontal salmón', rule('#ff8c70')],
  ['Horizontal lima', rule('#10f010')],
  ['Horizontal verde', rule('#087808')],
  ['Horizontal roja', rule('#f01010')],
  ['Horizontal azul', rule('#6898f0')],
  ['Horizontal marina', rule('#0000b0')],
  ['Vertical', <Glyph><path d="M8 0v15" stroke="#333" strokeWidth="1.500" /></Glyph>],
  ['Ángulo', <Glyph><path d="M11 2L1 12h13" stroke="#e06060" /><path d="M6 12c0-2-1-3-2-3" stroke="#e06060" /><path d="M8 11V5M6.500 7L8 5l1.500 2" stroke="#1818e8" /><circle cx="13.500" cy="6.500" r="1.500" stroke="#1818e8" /></Glyph>],
  ['Círculo', <Glyph><circle cx="7.500" cy="8" r="5" stroke="#f08040" /><path d="M5 8h5M7.500 5.500v5M10 4h4M12 2v4" stroke="#1818e8" /></Glyph>],
  ['Ondas de Elliott', letters('1', '3+5', '+2+4')],
  ['Ondas ABC', letters('a', '+b', 'c+')],
  ['Aceptar', <Check className="h-[14px] w-[14px] text-[#20b830]" strokeWidth={5} />],
  ['Me gusta', <ThumbsUp className="h-[13px] w-[13px] text-[#18a028]" fill="#30d040" />],
  ['Eliminar', <X className="h-[14px] w-[14px] text-[#f01818]" strokeWidth={6} />],
];

function Sidebar() {
  return (
    <aside className="flex w-[23px] shrink-0 flex-col border-l-2 border-r border-l-[#5c7c90] border-r-[#7c98a6] bg-[#9ab8c6]">
      <button className="flex h-[10px] shrink-0 items-center justify-center" aria-label="Subir">
        <ChevronUp className="h-[8px] w-[8px] text-gray-600" />
      </button>
      <div className="flex min-h-0 flex-1 flex-col">
        {TOOLS.map(([name, icon], i) => (
          <button
            key={name}
            aria-label={name}
            className={`flex min-h-0 flex-1 items-center justify-center ${i === 0 ? 'rounded-[2px] border border-[#6c8490] bg-[#88a0aa]' : ''}`}
          >
            {icon}
          </button>
        ))}
      </div>
      <span className="mx-auto h-[5px] w-[5px] rotate-45 bg-[#f0a020]" />
      <button className="flex h-[9px] shrink-0 items-center justify-center border-y border-[#6c8490] bg-[#b8d0dc]" aria-label="Bajar">
        <ChevronDown className="h-[7px] w-[8px]" strokeWidth={4} />
      </button>
      <button className="flex h-[24px] shrink-0 items-center justify-center" aria-label="Plantillas">
        <svg className="h-[18px] w-[18px]" viewBox="0 0 18 18" fill="none" aria-hidden="true">
          <path d="M5 4h9v11H5z" fill="#f4f4f4" stroke="#888" />
          <path d="M7 12l2-4 2 2 2-4" stroke="#c03030" />
          <circle cx="4" cy="4" r="3.500" fill="#109020" />
          <path d="M4 2v4" stroke="#fff" />
          <path d="M10 16l6-5" stroke="#333" strokeWidth="2" />
        </svg>
      </button>
      <button className="flex h-[23px] shrink-0 items-center justify-center" aria-label="Más">
        <svg className="h-[9px] w-[14px]" viewBox="0 0 14 9" aria-hidden="true">
          <path d="M1 2h2v2H1zM5 2h2v2H5zM9 2h2v2H9zM8 6h5l-2.500 3z" fill="#333" />
        </svg>
      </button>
      <button className="flex h-[17px] shrink-0 items-center justify-center bg-[#8298a8]" aria-label="Dibujo">
        <Glyph>
          <path d="M1 4l3 8 3-6 3 6" stroke="#208020" />
          <path d="M2 2l4 8 3-7" stroke="#c04040" />
          <path d="M8 12L14 3" stroke="#e8b020" strokeWidth="2.500" />
          <path d="M3 14h9" stroke="#c02020" />
        </Glyph>
      </button>
    </aside>
  );
}

function LegendBar() {
  const cell = 'flex items-center gap-[3px] border-r border-[#8fa6b2] px-[2px]';
  return (
    <div className="absolute left-0 top-0 flex h-[12px] border-b border-[#8fa6b2] bg-[#c8d8dc] text-[8px] font-bold">
      <div className={cell}>
        <button aria-label="Vender" className="bg-white"><Plus className="h-[9px] w-[9px] text-red-600" strokeWidth={6} /></button>
        <button aria-label="Comprar" className="bg-white"><Plus className="h-[9px] w-[9px] text-green-600" strokeWidth={6} /></button>
        <button aria-label="Cerrar gráfico"><CloseDot /></button>
      </div>
      <label className={cell}>
        <input type="checkbox" className="h-[7px] w-[7px] appearance-none border border-gray-500 bg-gray-100" />
        Precio
      </label>
      <button className={cell} aria-label="Lista"><List className="h-[8px] w-[8px]" strokeWidth={3} /></button>
      <label className={cell}>
        <input type="checkbox" className="h-[7px] w-[7px] appearance-none border border-gray-500 bg-gray-100" />
        Cierre (W)
      </label>
      <span className={cell}>
        <span className="h-[7px] w-[7px] bg-[#7c94a0]" />
        Tunel Domenec v4 (t t t t t)
      </span>
      <span className={cell}>
        <svg className="h-[7px] w-[8px]" viewBox="0 0 8 7" aria-hidden="true">
          <path d="M0 0h2v7H0zM6 0h2v7H6z" fill="#111" />
          <path d="M2 0h2v7H2z" fill="#e02020" />
          <path d="M4 0h2v7H4z" fill="#20c020" />
        </svg>
        Control Total Doc v.6
      </span>
    </div>
  );
}

function PricePanel() {
  const levels = Array.from({ length: 16 }, (_, i) => 8000 - i * 200);
  return (
    <section className="flex min-h-0 flex-1">
      <div className="relative flex-1 overflow-hidden">
        <h1 className="absolute left-[9px] top-[12px] whitespace-nowrap text-[33px] font-bold leading-[38px]">
          SPTRD, D
          <br />
          EEUU 500 Cash (1€)
        </h1>
        <PriceDrawing />
        <div className="text-[8px] font-bold">
          {FIBS.map((f) => (
            <Spot key={f.x + f.y} x={f.x} y={f.y - 13} look="">
              <span
                className="block h-[14px] w-[38px] border bg-white text-center leading-[12px]"
                style={{ color: f.color, borderColor: f.color }}
              >
                {f.label}
              </span>
            </Spot>
          ))}
          {NOTES.map((n) => (
            <Spot key={n.x + n.text} x={n.x} y={n.y} look={n.look}>{n.text}</Spot>
          ))}
          {BOXES.map((b) => (
            <Spot key={b.text} x={b.x} y={b.y} look={`flex items-center justify-center border bg-white text-[9px] font-normal ${b.look}`}>
              {b.text}
            </Spot>
          ))}
        </div>
        <LegendBar />
        <p className="absolute bottom-px left-[2px] text-[8px] leading-[9px]">IT-Finance.com - Tiempo Real</p>
      </div>
      <div className="relative w-[34px] overflow-hidden border-l border-[#8fa6b2] text-[9px] font-bold leading-[10px]">
        {levels.map((v, i) => (
          <Tick key={v} at={1.7 + i * 6.18}>{(v / 1000).toFixed(3)}</Tick>
        ))}
        <div className="text-[7px]">
          <Tick at={16.7} look="text-[#9a6400]"><span className={BOXED}>7.477,34</span></Tick>
          <Tick at={17.9} look="text-[#a00000]"><span className={BOXED}>7.474,86</span></Tick>
          <Tick at={19.1} look="text-[#e00000]"><span className={BOXED}>7.459,26</span></Tick>
        </div>
      </div>
    </section>
  );
}

function BottomBar() {
  return (
    <footer className="flex h-[17px] shrink-0 items-center border-t border-[#7c98a6] bg-[#9ab8c6]">
      <div className="flex items-center gap-[5px] px-[3px]">
        <button aria-label="Compartir"><Share2 className="h-[12px] w-[12px] text-white" fill="#fff" /></button>
        <button aria-label="Chat">
          <svg className="h-[12px] w-[12px]" viewBox="0 0 12 12" aria-hidden="true">
            <path d="M1 1h8v6H4L2 9V7H1z" fill="#5088e0" />
            <path d="M4 4h8v5h-1v2L9 9H4z" fill="#2860c8" />
          </svg>
        </button>
        <button aria-label="Informe">
          <svg className="h-[12px] w-[12px]" viewBox="0 0 12 12" fill="none" aria-hidden="true">
            <path d="M2 1h8v10H2z" fill="#eee" stroke="#555" />
            <path d="M4 3h4M4 5h2" stroke="#555" />
            <path d="M4 9l4-4" stroke="#d02020" strokeWidth="1.500" />
            <path d="M6 9h3" stroke="#20a020" strokeWidth="2" />
          </svg>
        </button>
        <button aria-label="Libro de órdenes">
          <svg className="h-[12px] w-[12px]" viewBox="0 0 12 12" aria-hidden="true">
            <path d="M0 1h6v2H0zM2 4h4v2H2zM0 7h6v2H0zM3 10h3v2H3z" fill="#10b020" />
            <path d="M6 1h4v2H6zM6 4h6v2H6zM6 7h3v2H6zM6 10h5v2H6z" fill="#e03040" />
          </svg>
        </button>
        <button aria-label="Ventanas">
          <svg className="h-[12px] w-[12px]" viewBox="0 0 12 12" fill="none" aria-hidden="true">
            <path d="M.5.500h7v6h-7zM2.500 3h7v6h-7zM4.500 5h7v6.500h-7z" fill="#fff" stroke="#2868c8" />
            <path d="M6 10l1.500-3L9 9l1.500-2" stroke="#20a020" />
          </svg>
        </button>
        <button className="text-[12px] leading-[12px] text-gray-700" aria-label="Plegar">«</button>
      </div>
      <button className="flex h-[10px] w-[11px] items-center justify-center border border-[#7c98a6] bg-[#b4ccd8]" aria-label="Desplazar a la izquierda">
        <ChevronLeft className="h-[7px] w-[7px]" strokeWidth={4} />
      </button>
      <div className="flex h-[10px] flex-1 justify-end border-y border-[#7c98a6] pr-[11px]">
        <div className="w-[60px] border-x border-[#7c98a6] bg-[#b0cedd]" />
      </div>
      <button className="flex h-[10px] w-[11px] items-center justify-center border border-[#7c98a6] bg-[#b4ccd8]" aria-label="Desplazar a la derecha">
        <ChevronRight className="h-[7px] w-[7px]" strokeWidth={4} />
      </button>
      <div className="flex w-[126px] items-center gap-[6px] overflow-hidden pl-[5px]">
        <button aria-label="Deshacer"><Undo2 className="h-[12px] w-[12px] text-[#1858c8]" strokeWidth={3.5} /></button>
        <button aria-label="Rehacer"><Redo2 className="h-[12px] w-[12px] text-[#78a0c8]" strokeWidth={3} /></button>
        <button aria-label="Configurar">
          <svg className="h-[12px] w-[12px]" viewBox="0 0 12 12" fill="none" aria-hidden="true">
            <path d="M7 0h5v11H7z" fill="#30c040" />
            <path d="M1 10l8-7" stroke="#444" strokeWidth="3" />
            <path d="M1 10l8-7" stroke="#fff" />
            <path d="M0 8l3 3" stroke="#d03030" strokeWidth="2" />
          </svg>
        </button>
        <button aria-label="Ajustar">
          <svg className="h-[12px] w-[12px]" viewBox="0 0 12 12" fill="none" aria-hidden="true">
            <circle cx="4.500" cy="4.500" r="3.500" fill="#fff" stroke="#333" />
            <path d="M7 7l4 4" stroke="#333" strokeWidth="2" />
            <path d="M10.500 0v6M0 10.500h6" stroke="#1818e8" strokeDasharray="2 1" />
          </svg>
        </button>
        <button className="text-gray-800" aria-label="Alejar"><ZoomOut className="h-[12px] w-[12px]" fill="#fff" strokeWidth={2.5} /></button>
        <button className="text-gray-800" aria-label="Acercar"><ZoomIn className="h-[12px] w-[12px]" fill="#fff" strokeWidth={2.5} /></button>
        <button aria-label="Teclado">
          <svg className="h-[12px] w-[12px]" viewBox="0 0 12 12" aria-hidden="true">
            <path d="M0 3h2v2H0zM3 3h2v2H3zM6 3h2v2H6zM9 3h2v2H9zM2 8h7l-3.500 4z" fill="#234a90" />
          </svg>
        </button>
      </div>
    </footer>
  );
}

export default function App() {
  return (
    <div className="flex h-screen flex-col overflow-hidden bg-white font-['Liberation_Sans',Arial,sans-serif] text-black">
      <Toolbar />
      <div className="flex min-h-0 flex-1">
        <Sidebar />
        <main className="flex min-w-0 flex-1 flex-col">
          <PricePanel />
          <Panel
            title="Sistema de trenes Doc v4 (f f)"
            size="h-[63px]"
            striped
            axis={
              <>
                <Tick at={27}>80</Tick>
                <Tick at={10}><span className={BOXED}>100</span></Tick>
                <Tick at={31}><span className={BOXED}>71,071</span></Tick>
                <Tick at={39} look="text-[#e00000]"><span className={BOXED}>63,884</span></Tick>
                <Tick at={54} look="text-[#2020b0]"><span className={BOXED}>50</span></Tick>
                <Tick at={92}><span className={BOXED}>0</span></Tick>
                <Tick at={77}><span className={BOXED}>20</span><span className={`text-[#e00000] ${BOXED}`}>364</span></Tick>
              </>
            }
          >
            <TrainDrawing />
          </Panel>
          <Panel
            title="Willy Doc (t)"
            size="h-[56px]"
            axis={
              <>
                <Tick at={10}><span className={BOXED}>0</span></Tick>
                <Tick at={31} look="text-[#2020b0]"><span className={BOXED}>-25</span></Tick>
                <Tick at={53} look="text-[#2020b0]"><span className={BOXED}>-50</span><span className={BOXED}>268</span></Tick>
                <Tick at={74} look="text-[#e00000]"><span className={BOXED}>-75</span></Tick>
                <Tick at={91}><span className={BOXED}>-100</span></Tick>
              </>
            }
          >
            <WillyDrawing />
          </Panel>
          <Panel
            title="Awesome Evolution Doc"
            size="h-[65px]"
            axis={
              <>
                <Tick at={33} look="text-[#2020e0]"><span className={BOXED}>0</span></Tick>
                <Tick at={44} look="text-[#e89020]"><span className={BOXED}>0,0000</span></Tick>
                <Tick at={52} look="text-[#b000b0]"><span className={BOXED}>-88,968</span></Tick>
                <Tick at={60} look="text-[#e00000]"><span className={BOXED}>-88,968</span></Tick>
                <Tick at={88}>-500</Tick>
              </>
            }
          >
            <AwesomeDrawing />
          </Panel>
          <Panel
            title="Barra Fuerza Fondo Mercado v4 (f)"
            size="h-[22px]"
            striped
            axis={
              <>
                <Tick at={55}><span className={BOXED}>1,0000</span></Tick>
                <Tick at={78} look="text-[#2020e0]"><span className={BOXED}>0,4494</span></Tick>
              </>
            }
          >
            <ForceDrawing />
          </Panel>
          <div className="h-[13px] shrink-0 border-t border-[#8fa6b2] pr-[34px] text-[8px] font-bold">
            <div className="relative h-full">
              {MONTHS.map(([name, x]) => (
                <span
                  key={x}
                  className="absolute top-[2px] -translate-x-1/2 leading-[10px]"
                  style={{ left: `${((x - X0) / PLOT_W) * 100}%` }}
                >
                  {name}
                </span>
              ))}
            </div>
          </div>
          <BottomBar />
        </main>
      </div>
    </div>
  );
}
